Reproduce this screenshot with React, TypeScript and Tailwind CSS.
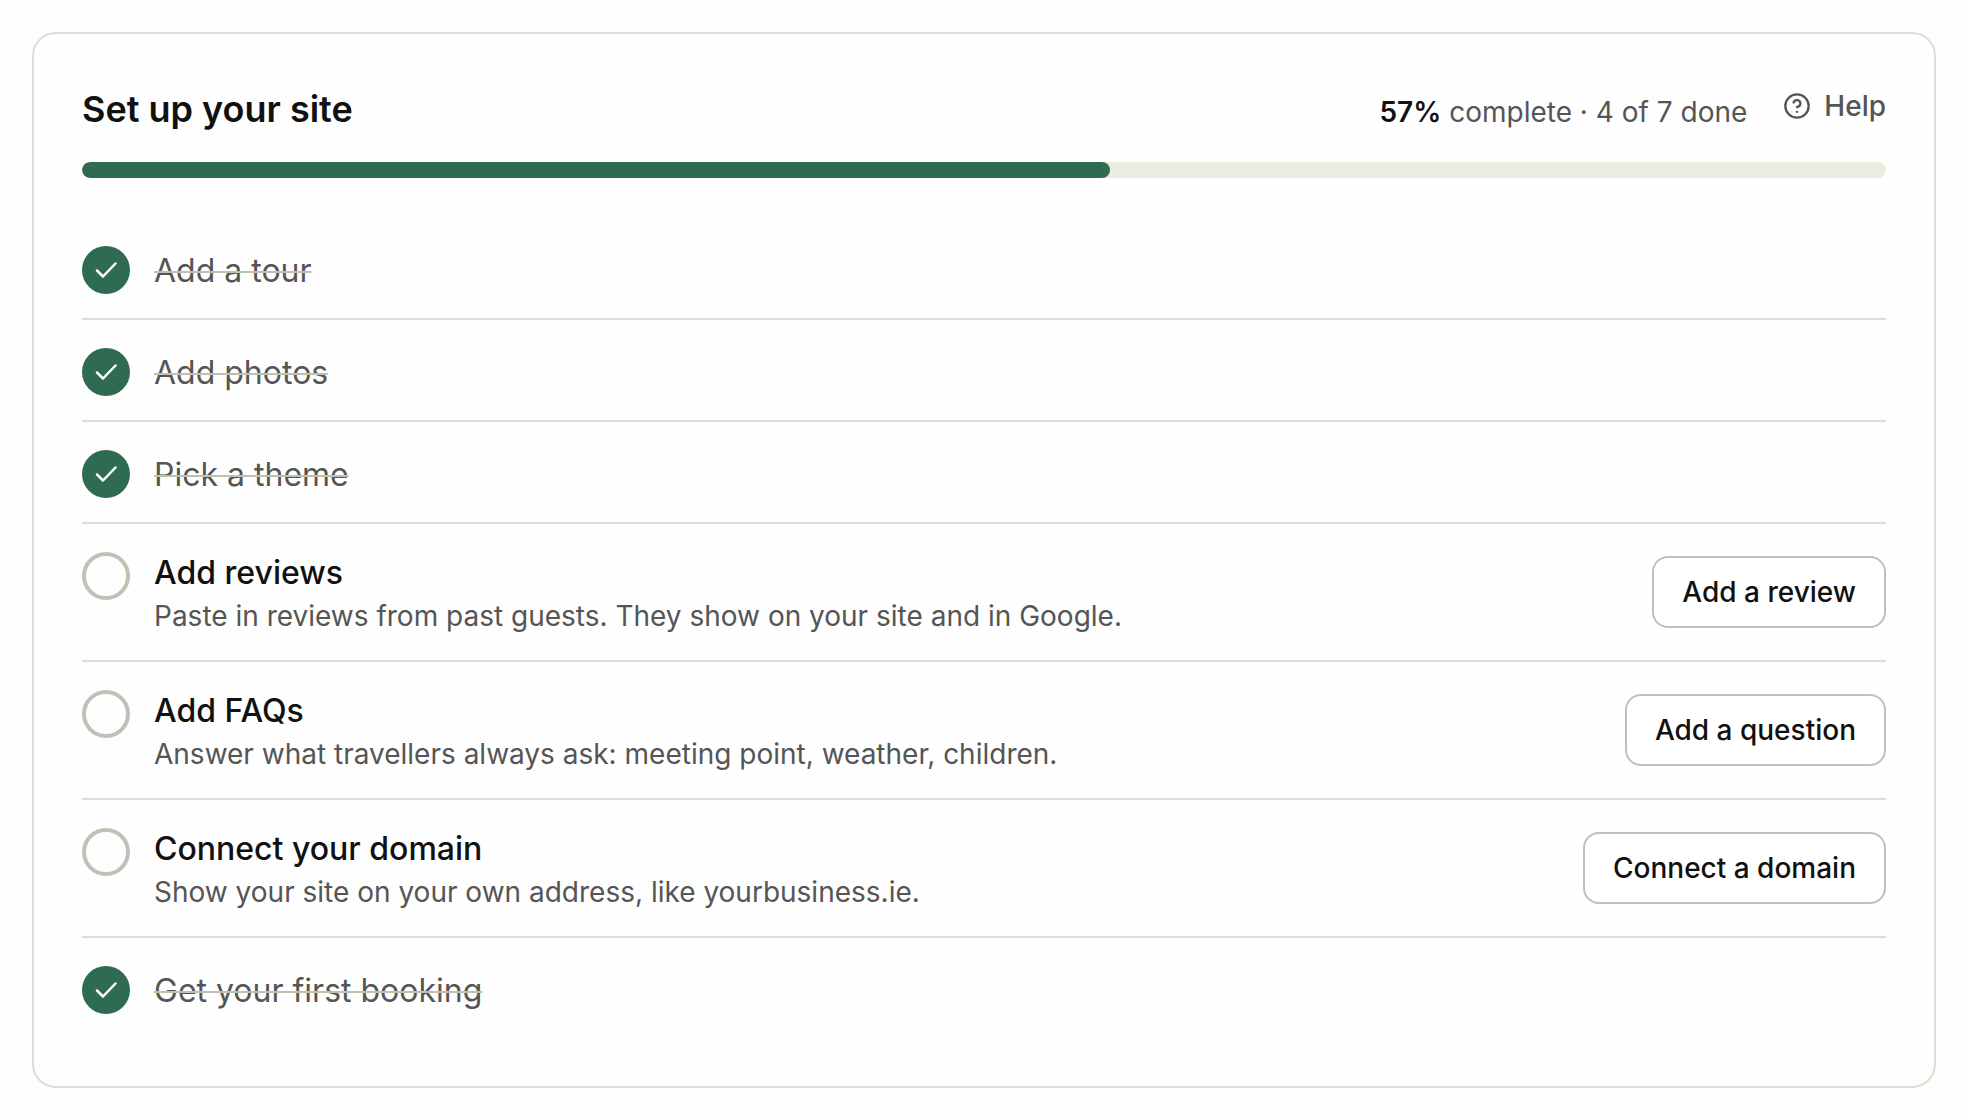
import { CircleQuestionMark } from "lucide-react";

interface Step {
    title: string;
    description?: string;
    action?: string;
    done: boolean;
}

const steps: Step[] = [
    { title: "Add a tour", done: true },
    { title: "Add photos", done: true },
    { title: "Pick a theme", done: true },
    {
        title: "Add reviews",
        description: "Paste in reviews from past guests. They show on your site and in Google.",
        action: "Add a review",
        done: false,
    },
    {
        title: "Add FAQs",
        description: "Answer what travellers always ask: meeting point, weather, children.",
        action: "Add a question",
        done: false,
    },
    {
        title: "Connect your domain",
        description: "Show your site on your own address, like yourbusiness.ie.",
        action: "Connect a domain",
        done: false,
    },
    { title: "Get your first booking", done: true },
];

function StepRow({ step }: { step: Step }) {
    if (step.done) {
        return (
            <li className="flex items-start gap-6 py-6">
                <span className="mt-1 size-12 shrink-0 rounded-full bg-[#2e6b50] text-white">
                    <svg
                        viewBox="0 0 48 48"
                        className="size-12"
                        fill="none"
                        stroke="currentColor"
                        strokeWidth="2.5"
                        strokeLinecap="round"
                        strokeLinejoin="round"
                        aria-hidden="true"
                    >
                        <path d="M15 24.5l6 6L33.5 17.5" />
                    </svg>
                </span>
                <span className="pt-1.5 text-[32px] leading-[46px] text-[#555555] line-through decoration-[#c0c0b0] decoration-2">
                    {step.title}
                </span>
            </li>
        );
    }

    return (
        <li className="flex items-start gap-6 py-6">
            <span className="mt-1 size-12 shrink-0 rounded-full border-4 border-[#c0c0b4]" />
            <div className="min-w-0 flex-1">
                <h3 className="text-[32px] leading-[50px] font-medium">{step.title}</h3>
                <p className="pb-0.5 text-[28px] leading-9 text-[#555555]">{step.description}</p>
            </div>
            <button
                type="button"
                className="h-18 shrink-0 self-center rounded-2xl border-2 border-[#c0c0b4] bg-white px-7 text-[28px] font-medium"
            >
                {step.action}
            </button>
        </li>
    );
}

export default function App() {
    const done = steps.filter((step) => step.done).length;
    const percent = Math.round((done / steps.length) * 100);

    return (
        <main className="min-h-screen bg-[#fdfdfd] p-8 font-['Inter',sans-serif] text-[#111111]">
            <section className="rounded-3xl border-2 border-[#deded0] bg-[#fefefe] p-12">
                <header className="flex items-start gap-9">
                    <div className="flex flex-1 items-baseline justify-between gap-8">
                        <h2 className="text-[36px] leading-[54px] font-semibold">Set up your site</h2>
                        <p className="text-[28px] leading-10 text-[#555555]">
                            <strong className="font-semibold text-[#111111]">{percent}%</strong> complete · {done} of {steps.length} done
                        </p>
                    </div>
                    <button type="button" className="flex h-12 items-center gap-[13px] text-[28px] font-medium text-[#555555]">
                        <CircleQuestionMark className="size-7" strokeWidth={2} />
                        Help
                    </button>
                </header>

                <div
                    role="progressbar"
                    aria-label="Setup progress"
                    aria-valuenow={percent}
                    aria-valuemin={0}
                    aria-valuemax={100}
                    className="mt-[26px] h-4 overflow-hidden rounded-full bg-[#ebebe0]"
                >
                    <div className="h-full rounded-full bg-[#2e6b50]" style={{ width: `${percent}%` }} />
                </div>

                <ul className="mt-10 divide-y-2 divide-[#deded0]">
                    {steps.map((step) => (
                        <StepRow key={step.title} step={step} />
                    ))}
                </ul>
            </section>
        </main>
    );
}
